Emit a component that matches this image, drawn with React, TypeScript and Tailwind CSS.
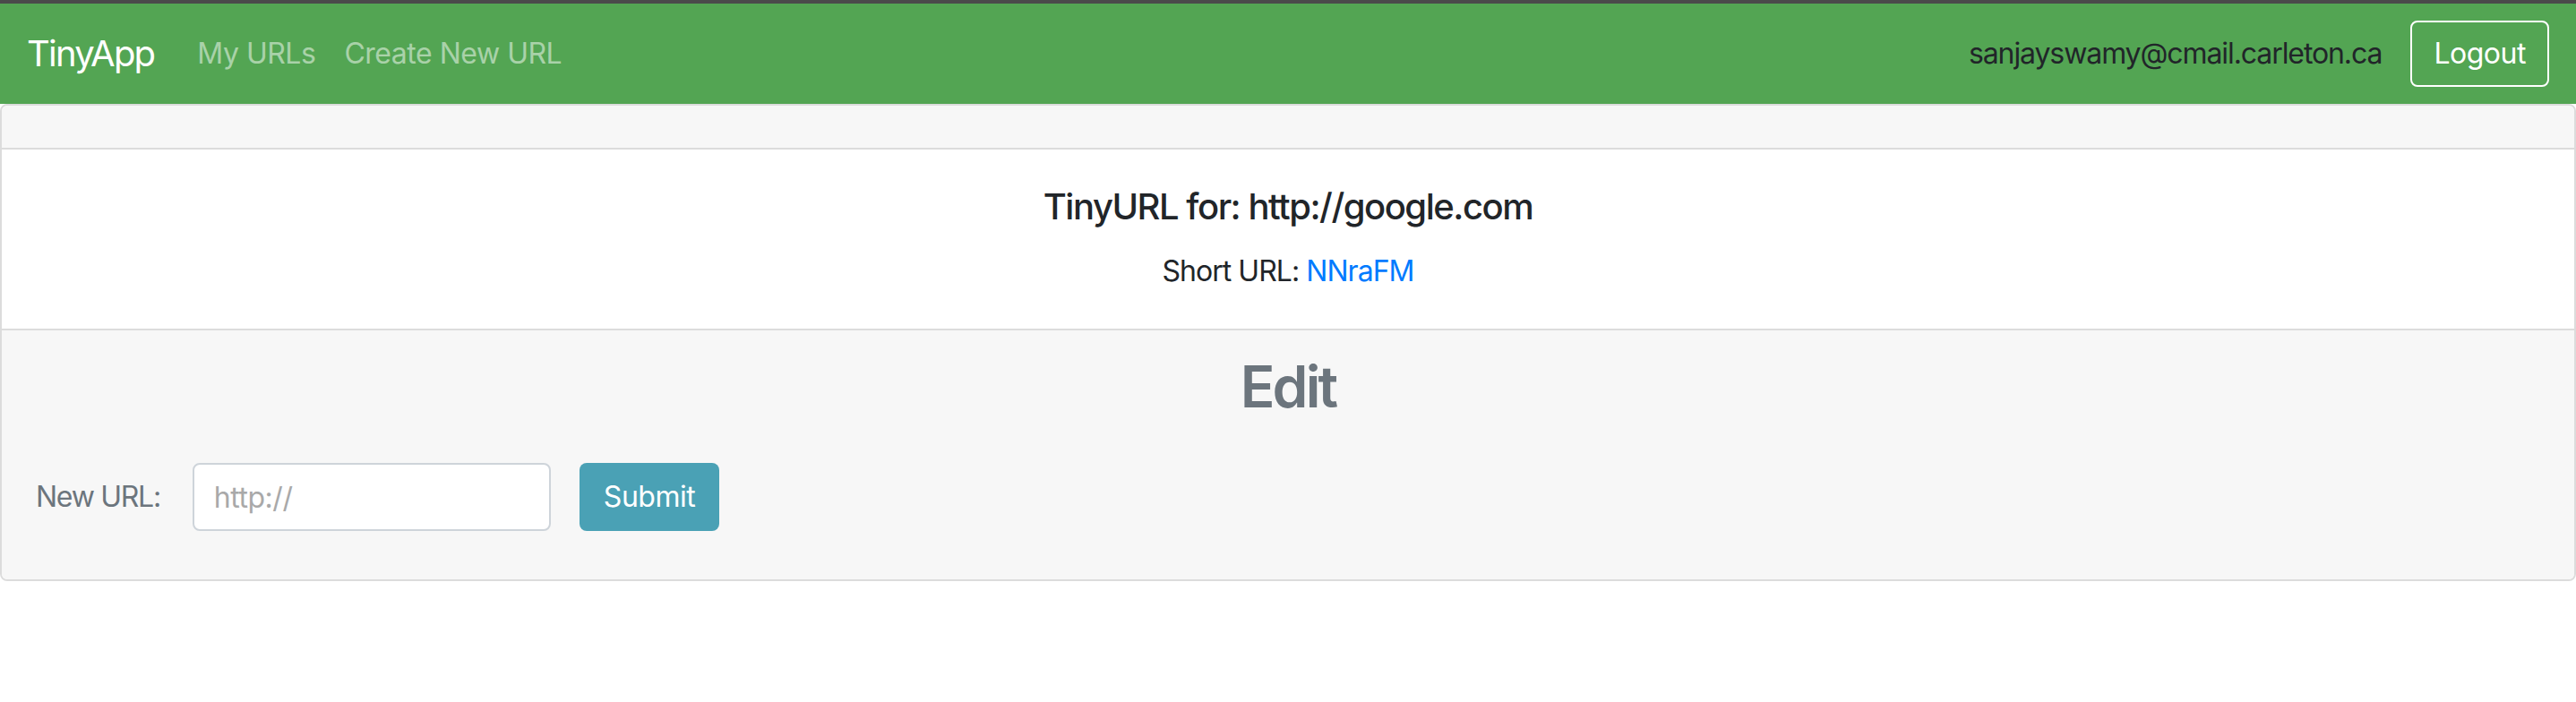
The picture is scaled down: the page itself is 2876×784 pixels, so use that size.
import React from "react";

export default function App() {
  return (
    <div className="min-h-[784px] bg-white tracking-[-0.03em]" style={{ fontFamily: "Inter, 'Noto Sans', sans-serif" }}>
      <div className="h-[4px] bg-[#4a4a4a]" />
      <nav className="flex h-[112px] items-center bg-[#53a553] px-[30px]">
        <span className="mr-[32px] text-[40px] leading-[60px] tracking-[-0.045em] text-white">TinyApp</span>
        <a className="px-[16px] text-[32px] leading-[48px] text-white/50">My URLs</a>
        <a className="px-[16px] text-[32px] leading-[48px] text-white/50">Create New URL</a>
        <div className="ml-auto flex items-center gap-[32px]">
          <span className="text-[32px] leading-[48px] tracking-[-0.034em] text-[#212529]">sanjayswamy@cmail.carleton.ca</span>
          <button className="h-[74px] rounded-[8px] border-2 border-white px-[24px] text-[32px] leading-[48px] text-white">
            Logout
          </button>
        </div>
      </nav>
      <div className="overflow-hidden rounded-[8px] border-2 border-[#dcdcdc]">
        <div className="h-[49px] border-b-2 border-[#dcdcdc] bg-[#f7f7f7]" />
        <div className="bg-white px-[40px] py-[40px] text-center">
          <h5 className="mb-[24px] text-[40px] font-medium leading-[48px] tracking-[-0.037em] text-[#212529]">
            TinyURL for: http://google.com
          </h5>
          <p className="text-[32px] leading-[48px] tracking-[-0.03em] text-[#212529]">
            Short URL: <a className="text-[#007bff]">NNraFM</a>
          </p>
        </div>
        <div className="border-t-2 border-[#dcdcdc] bg-[#f7f7f7] px-[38px] pb-[54px] pt-[24px]">
          <h2 className="text-center text-[64px] font-semibold leading-[77px] tracking-[-0.045em] text-[#6c757d]">Edit</h2>
          <div className="mt-[47px] flex items-center">
            <label className="mr-[36px] text-[32px] leading-[48px] tracking-[-0.04em] text-[#6c757d]">New URL:</label>
            <input
              placeholder="http://"
              className="h-[76px] w-[400px] rounded-[8px] border-2 border-[#ced4da] bg-white px-[22px] text-[32px] text-[#495057] outline-none placeholder:text-[#a9a9a9]"
            />
            <button className="ml-[32px] h-[76px] rounded-[8px] bg-[#4aa1b5] px-[27px] text-[32px] leading-[48px] text-white">
              Submit
            </button>
          </div>
        </div>
      </div>
    </div>
  );
}
